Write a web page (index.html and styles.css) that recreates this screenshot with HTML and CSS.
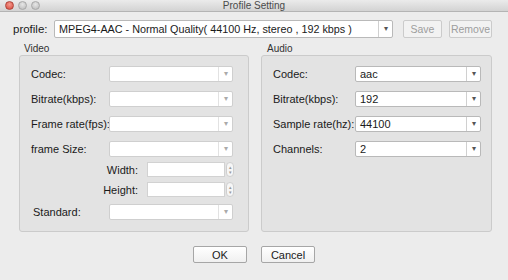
FILE: index.html
```html
<!DOCTYPE html>
<html lang="en">
<head>
    <meta charset="UTF-8">
    <title>Profile Setting</title>
    <link rel="stylesheet" href="styles.css">
</head>
<body>
    <div class="window">
        <div class="titlebar">
            <div class="lights">
                <span class="light red"></span>
                <span class="light"></span>
                <span class="light"></span>
            </div>
            <span class="title">Profile Setting</span>
        </div>

        <div class="profile-row">
            <span class="profile-label">profile:</span>
            <div class="combo profile-combo">
                <span class="combo-text">MPEG4-AAC - Normal Quality( 44100 Hz, stereo , 192 kbps )</span>
                <span class="combo-arrow">&#9662;</span>
            </div>
            <button class="btn disabled save">Save</button>
            <button class="btn disabled remove">Remove</button>
        </div>

        <div class="groups">
            <div class="group video">
                <div class="group-title">Video</div>
                <div class="group-box">
                    <div class="row">
                        <span class="label">Codec:</span>
                        <div class="combo off"><span class="combo-text"></span><span class="combo-arrow">&#9662;</span></div>
                    </div>
                    <div class="row">
                        <span class="label">Bitrate(kbps):</span>
                        <div class="combo off"><span class="combo-text"></span><span class="combo-arrow">&#9662;</span></div>
                    </div>
                    <div class="row">
                        <span class="label">Frame rate(fps):</span>
                        <div class="combo off"><span class="combo-text"></span><span class="combo-arrow">&#9662;</span></div>
                    </div>
                    <div class="row">
                        <span class="label">frame Size:</span>
                        <div class="combo off"><span class="combo-text"></span><span class="combo-arrow">&#9662;</span></div>
                    </div>
                    <div class="row size-row first">
                        <span class="size-label">Width:</span>
                        <div class="spin-input"></div>
                        <div class="spinner"><span>&#9652;</span><span>&#9662;</span></div>
                    </div>
                    <div class="row size-row">
                        <span class="size-label">Height:</span>
                        <div class="spin-input"></div>
                        <div class="spinner"><span>&#9652;</span><span>&#9662;</span></div>
                    </div>
                    <div class="row standard-row">
                        <span class="label">Standard:</span>
                        <div class="combo off"><span class="combo-text"></span><span class="combo-arrow">&#9662;</span></div>
                    </div>
                </div>
            </div>

            <div class="group audio">
                <div class="group-title">Audio</div>
                <div class="group-box">
                    <div class="row">
                        <span class="label">Codec:</span>
                        <div class="combo"><span class="combo-text">aac</span><span class="combo-arrow">&#9662;</span></div>
                    </div>
                    <div class="row">
                        <span class="label">Bitrate(kbps):</span>
                        <div class="combo"><span class="combo-text">192</span><span class="combo-arrow">&#9662;</span></div>
                    </div>
                    <div class="row">
                        <span class="label">Sample rate(hz):</span>
                        <div class="combo"><span class="combo-text">44100</span><span class="combo-arrow">&#9662;</span></div>
                    </div>
                    <div class="row">
                        <span class="label">Channels:</span>
                        <div class="combo"><span class="combo-text">2</span><span class="combo-arrow">&#9662;</span></div>
                    </div>
                </div>
            </div>
        </div>

        <div class="actions">
            <button class="btn action">OK</button>
            <button class="btn action">Cancel</button>
        </div>
    </div>
</body>
</html>
```

FILE: styles.css
```css
* {
    box-sizing: border-box;
}
body {
    margin: 0;
    background: #ececec;
    font-family: "Liberation Sans", Arial, sans-serif;
    font-size: 11px;
    color: #1a1a1a;
}
.window {
    width: 508px;
    height: 280px;
    background: #ececec;
    overflow: hidden;
}
.titlebar {
    position: relative;
    height: 12px;
    background: linear-gradient(#ebebeb, #d3d3d3);
    border-bottom: 1px solid #b4b4b4;
    display: flex;
    justify-content: center;
    align-items: center;
}
.lights {
    position: absolute;
    left: 5px;
    top: 1px;
    display: flex;
    gap: 4px;
}
.light {
    width: 9px;
    height: 9px;
    border-radius: 50%;
    background: radial-gradient(circle at 50% 35%, #e6e6e6, #b9b9b9);
    border: 1px solid #a8a8a8;
}
.light.red {
    background: radial-gradient(circle at 50% 35%, #f59a8e, #d6473a);
    border-color: #b0463c;
}
.title {
    font-size: 10px;
    color: #4a4a4a;
    line-height: 11px;
}

.profile-row {
    display: flex;
    align-items: center;
    height: 18px;
    margin-top: 8px;
    padding-left: 13px;
}
.profile-label {
    width: 41px;
    font-size: 11.5px;
}
.combo {
    display: flex;
    flex-shrink: 0;
    height: 16px;
    width: 124px;
    background: #fff;
    border: 1px solid #b9b9b9;
    border-radius: 2px;
}
.combo-text {
    flex: 1;
    padding-left: 4px;
    line-height: 14px;
    white-space: nowrap;
    overflow: hidden;
}
.combo-arrow {
    width: 14px;
    border-left: 1px solid #d0d0d0;
    text-align: center;
    font-size: 8px;
    line-height: 14px;
    color: #555;
}
.combo.off .combo-arrow {
    color: #aaa;
    border-left-color: #e2e2e2;
}
.combo.off {
    border-color: #cfcfcf;
}
.profile-combo {
    width: 339px;
    height: 18px;
}
.profile-combo .combo-text {
    line-height: 16px;
    padding-left: 4px;
    font-size: 10.8px;
}
.profile-combo .combo-arrow {
    line-height: 16px;
}

.btn {
    font-family: inherit;
    font-size: 11px;
    height: 18px;
    padding: 0;
    white-space: nowrap;
    background: linear-gradient(#ffffff, #f0f0f0);
    border: 1px solid #b0b0b0;
    border-radius: 2px;
    color: #1a1a1a;
}
.btn.disabled {
    font-size: 10.5px;
    color: #9d9d9d;
    border-color: #cbcbcb;
    background: #f2f2f2;
}
.save {
    width: 39px;
    margin-left: 10px;
}
.remove {
    width: 43px;
    margin-left: 7px;
}

.groups {
    display: flex;
    gap: 12px;
    padding-left: 19px;
    margin-top: 5px;
}
.group-title {
    font-size: 10px;
    color: #333;
    padding-left: 5px;
    height: 12px;
    line-height: 12px;
}
.video .group-box {
    width: 230px;
}
.audio .group-box {
    width: 231px;
}
.audio .group-title {
    padding-left: 6px;
}
.group-box {
    height: 177px;
    background: #e3e3e3;
    border: 1px solid #cbcbcb;
    border-radius: 3px;
    padding: 10px 0 0 11px;
}
.row {
    display: flex;
    align-items: center;
    height: 16px;
    margin-bottom: 9px;
}
.label {
    width: 78px;
    flex-shrink: 0;
    white-space: nowrap;
}
.audio .label {
    width: 82px;
}
.audio .combo {
    width: 126px;
}
.size-row {
    height: 15px;
    margin-bottom: 5px;
}
.size-row.first {
    margin-top: -4px;
}
.size-label {
    width: 116px;
    text-align: right;
    padding-right: 9px;
}
.spin-input {
    width: 78px;
    height: 15px;
    background: #fff;
    border: 1px solid #d2d2d2;
}
.spinner {
    display: flex;
    flex-direction: column;
    justify-content: center;
    width: 8px;
    height: 15px;
    margin-left: 1px;
    background: #f6f6f6;
    border: 1px solid #cfcfcf;
    border-radius: 4px;
    font-size: 5px;
    line-height: 5px;
    color: #999;
    text-align: center;
}
.standard-row {
    margin-top: 7px;
}
.standard-row .label {
    padding-left: 2px;
}

.actions {
    display: flex;
    gap: 14px;
    padding-left: 193px;
    margin-top: 14px;
}
.action {
    width: 54px;
    height: 17px;
    border-color: #a6a6a6;
}
```
